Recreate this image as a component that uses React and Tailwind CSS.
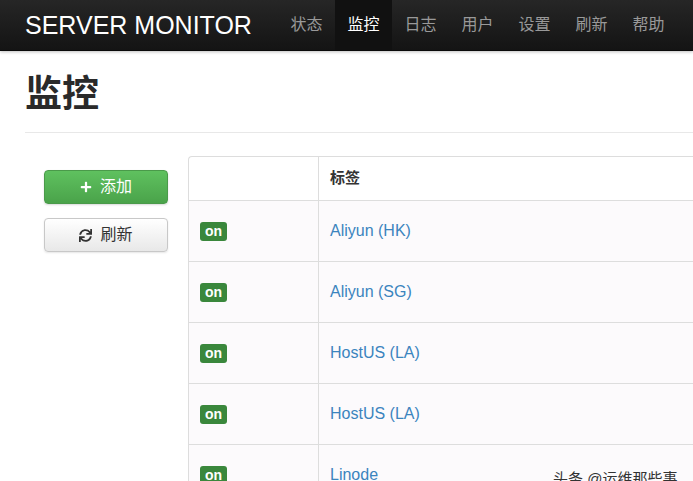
import { FaPlus, FaSync } from "react-icons/fa";

const navItems = ["状态", "监控", "日志", "用户", "设置", "刷新", "帮助"];

const servers = [
  { id: 1, label: "Aliyun (HK)" },
  { id: 2, label: "Aliyun (SG)" },
  { id: 3, label: "HostUS (LA)" },
  { id: 4, label: "HostUS (LA)" },
  { id: 5, label: "Linode" },
];

const font = { fontFamily: '"Liberation Sans", "Noto Sans CJK SC", sans-serif' };

export default function App() {
  return (
    <div
      className="relative w-[693px] h-[481px] overflow-hidden bg-white text-[#333]"
      style={font}
    >
      {/* top bar */}
      <div className="h-[51px] flex items-stretch bg-gradient-to-b from-[#262626] to-[#141414] border-b border-[#0a0a0a] shadow-[0_1px_3px_rgba(0,0,0,0.25)]">
        <div className="pl-[25px] w-[278px] shrink-0 flex items-center text-white text-[25px] leading-none">
          SERVER MONITOR
        </div>
        <div className="flex">
          {navItems.map((item) => (
            <div
              key={item}
              className={
                item === "监控"
                  ? "w-[57px] flex items-center justify-center text-[16px] text-white bg-[#111]"
                  : "w-[57px] flex items-center justify-center text-[16px] text-[#999]"
              }
            >
              {item}
            </div>
          ))}
        </div>
      </div>

      {/* page header */}
      <div className="pl-[25px]">
        <h1 className="pt-[22px] h-[81px] text-[37px] font-bold leading-[44px] text-[#2a2a2a]">
          监控
        </h1>
        <div className="border-t border-[#e8e8e8]" />
      </div>

      {/* content */}
      <div className="flex pt-[23px]">
        <div className="pl-[44px] w-[188px] shrink-0 pt-[14px] flex flex-col gap-[14px]">
          <button className="w-[124px] h-[34px] rounded-[4px] border border-[#4a9a4a] bg-gradient-to-b from-[#5fc15f] to-[#4aa34a] shadow-[0_1px_2px_rgba(0,0,0,0.15)] text-white text-[16px] flex items-center justify-center gap-[8px]">
            <FaPlus className="text-[12px]" />
            添加
          </button>
          <button className="w-[124px] h-[34px] rounded-[4px] border border-[#c8c8c8] bg-gradient-to-b from-white to-[#e8e8e8] shadow-[0_1px_2px_rgba(0,0,0,0.1)] text-[#333] text-[16px] flex items-center justify-center gap-[8px]">
            <FaSync className="text-[13px]" />
            刷新
          </button>
        </div>

        <div className="w-[560px] shrink-0 border-l border-t border-[#ddd] rounded-tl-[4px]">
          <div className="flex h-[44px] border-b border-[#ddd]">
            <div className="w-[130px] border-r border-[#ddd]" />
            <div className="pl-[11px] flex items-center text-[15px] font-bold">标签</div>
          </div>
          {servers.map((s) => (
            <div key={s.id} className="flex h-[61px] border-b border-[#ddd] bg-[#fcfafc]">
              <div className="w-[130px] border-r border-[#ddd] pl-[11px] flex items-center">
                <span className="bg-[#3a873c] text-white text-[14px] font-bold leading-none px-[5px] pt-[2px] pb-[3px] rounded-[3px]">
                  on
                </span>
              </div>
              <div className="pl-[11px] flex items-center text-[16px] text-[#3b84be]">
                {s.label}
              </div>
            </div>
          ))}
        </div>
      </div>

      {/* watermark */}
      <div className="absolute left-[553px] top-[468px] text-[15px] text-[#333] whitespace-nowrap">
        头条 @运维那些事
      </div>
    </div>
  );
}
